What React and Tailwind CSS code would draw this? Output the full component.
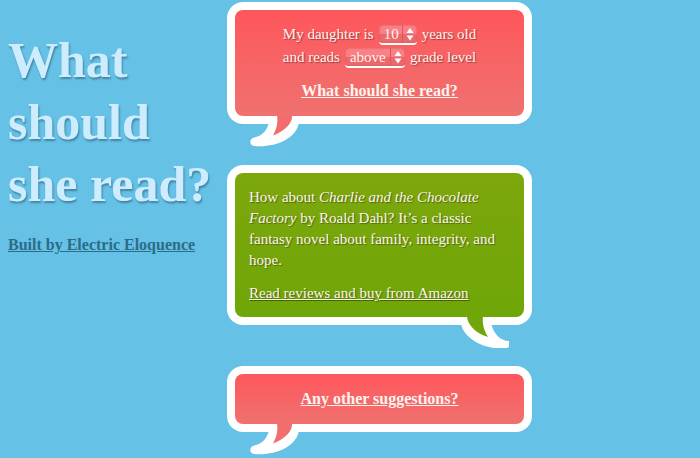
const serif = "font-[Georgia,'Liberation_Serif',serif]";

function PinkTail() {
  return (
    <svg aria-hidden="true" className="absolute -bottom-6 left-5.5 h-[34px] w-[52px]" viewBox="0 0 52 34">
      <path d="M20 8C18 17 13 22 5 23.5C0 25 0 31 5 32C25 34 48 25 50 8Z" fill="#fff" />
      <path d="M28 1H43C44 10 34 18 24 21.5C28 14 29 9 28 1Z" fill="#f26e6d" />
    </svg>
  );
}

function GreenTail() {
  return (
    <svg aria-hidden="true" className="absolute -bottom-6 right-5.5 h-[34px] w-[50px]" viewBox="0 0 50 34">
      <path d="M1 8C2 20 18 31 34 33L47 33L49 32V26C40 26 33 18 31 8Z" fill="#fff" />
      <path d="M7 1H23C22 9 24 15 28 22C17 19 7 10 7 1Z" fill="#70a609" />
    </svg>
  );
}

function Bubble({ green, className, children }) {
  const fill = green ? "from-[#7da70c] to-[#6fa608]" : "from-[#fe565c] to-[#ef716f]";
  return (
    <section className="relative rounded-[16px] bg-white p-2">
      <div className={`rounded-lg bg-linear-to-b ${fill} ${className}`}>{children}</div>
      {green ? <GreenTail /> : <PinkTail />}
    </section>
  );
}

function Picker({ label, options, value, width }) {
  return (
    <span className="relative mx-[5px] inline-flex">
      <select
        aria-label={label}
        defaultValue={value}
        className={`h-5 ${width} appearance-none rounded-sm border-b-2 border-white bg-linear-to-b from-[#f98085] from-50% to-[#ed686c] to-50% pl-[5px] text-[15px] leading-[18px] text-[#fff3ee] shadow-[inset_0_0_2px_#c94c52]`}
      >
        {options.map((o) => (
          <option key={o}>{o}</option>
        ))}
      </select>
      <svg aria-hidden="true" className="pointer-events-none absolute top-0 right-0 h-[18px] w-[15px]" viewBox="0 0 15 18">
        <path d="M0.5 0V18" stroke="#d75960" />
        <path d="M4.5 8L8 3L11.5 8ZM4.5 10.5H11.5L8 15.5Z" fill="#fff" />
      </svg>
    </span>
  );
}

export default function App() {
  return (
    <div className={`flex min-h-screen items-start overflow-x-hidden bg-[#65c1e6] ${serif} text-[15px]`}>
      <header className="w-[227px] shrink-0 pt-[29px] pl-2">
        <h1 className="text-[50px] leading-[62px] font-bold text-[#cdedff] [text-shadow:1px_2px_2px_#4284a3]">
          What should she&nbsp;read?
        </h1>
        <a href="#about" className="mt-5 block text-[16px] leading-5 font-bold text-[#2c6c88] underline">
          Built by Electric Eloquence
        </a>
      </header>
      <main className="flex w-[305px] flex-col gap-[41px] pt-0.5 text-[#fff3ee] [text-shadow:1px_1px_1px_#00000066]">
        <Bubble className="px-3.5 pt-[13px] pb-[15px] text-center">
          <div className="flex h-[23px] items-center justify-center">
            My daughter is
            <Picker label="Age" value="10" options={["8", "9", "10", "11", "12"]} width="w-[38px]" />
            years old
          </div>
          <div className="flex h-[23px] items-center justify-center">
            and reads
            <Picker label="Reading level" value="above" options={["below", "at", "above"]} width="w-[60px]" />
            grade level
          </div>
          <button className="mt-3 block w-full text-[16px] leading-5 font-bold underline">What should she read?</button>
        </Bubble>
        <Bubble green className="px-3.5 pt-3.5 pb-[13px] leading-[21px]">
          <p>
            How about <cite>Charlie and the Chocolate Factory</cite> by Roald Dahl? It’s a classic fantasy novel about
            family, integrity, and hope.
          </p>
          <a href="#amazon" className="mt-3 block underline">Read reviews and buy from Amazon</a>
        </Bubble>
        <Bubble className="px-3.5 py-[15px] text-center">
          <button className="block w-full text-[16px] leading-5 font-bold underline">Any other suggestions?</button>
        </Bubble>
      </main>
    </div>
  );
}
